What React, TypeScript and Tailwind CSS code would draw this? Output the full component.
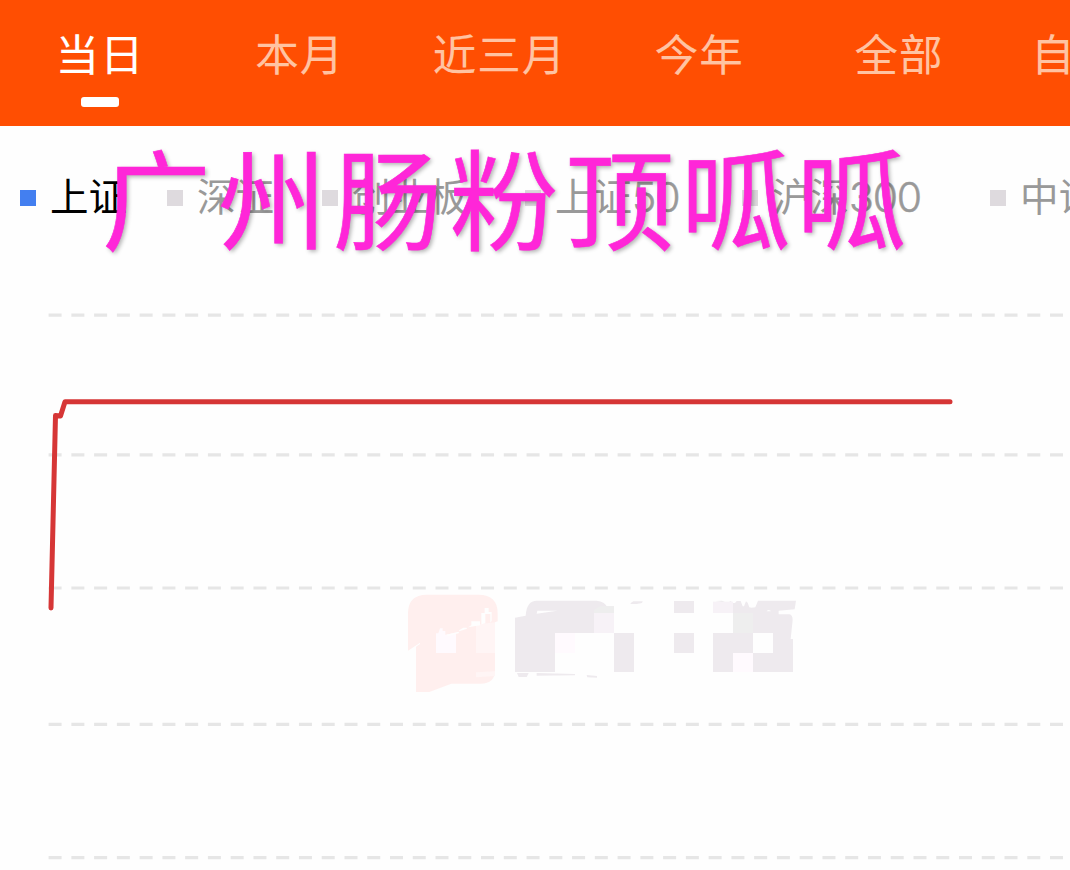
import React, { useState } from 'react';

interface IndexItem {
  name: string;
  digits?: string;
  width: string;
}

const TABS = ['当日', '本月', '近三月', '今年', '全部'];

const INDEXES: IndexItem[] = [
  { name: '上证', width: 'w-[147px]' },
  { name: '深证', width: 'w-[155px]' },
  { name: '创业板', width: 'w-[203px]' },
  { name: '上证', digits: '50', width: 'w-[217px]' },
  { name: '沪深', digits: '300', width: 'w-[248px]' },
  { name: '中证', width: 'w-[120px]' },
];

const GRID_LINES = [315.2, 454.8, 588, 724.4, 857.7];

function Watermark() {
  return (
    <g transform="translate(390 580) scale(0.33333)">
      {/* Badge */}
      <path
        d="M54 212V100Q54 44 110 44H266Q323 44 323 100V124L315 127V270Q315 311 272 311H184L118 336H78V200L90 192V188Z"
        fill="#ffefee"
      />
      <path d="M258 134L315 127V219H258ZM258 277L315 274V288L258 292Z" fill="#fff5f5" />
      <path d="M138 160H145L150 145H158V153H166V164L198 158V219H138Z" fill="#fffafe" />
      <path d="M170 164L205 155L208 159L175 168ZM207 151L220 143H230L231 146L208 154ZM234 142L244 136V124H270V136ZM274 133V99H284V84H296V96H305V122L301 128V102H286V130Z" fill="#fefefe" />

      {/* First character block */}
      <path
        d="M375 113L407 107Q410 62 440 62H620Q645 66 650 79H672V99H612V159H495V276H375Z"
        fill="#eeeaee"
      />
      <path d="M442 92H502L440 101Z" fill="#fefefe" />
      <path d="M612 99H672V159H612Z" fill="#f7f2f7" />
      <path d="M630 79H672V99H612V90Z" fill="#eeeeee" />
      <path d="M495 159H555V219H495Z" fill="#fffafe" />
      <path d="M672 159H732V276H672Z" fill="#eeeaee" />
      <path d="M381 279H416L410 291H386ZM440 279L555 282V286L440 287ZM590 285L621 288V293L592 292ZM722 69L730 64H758L756 69L740 72H722Z" fill="#eeeaee" />

      {/* Middle squares */}
      <path d="M852 63H912V99H852ZM852 159H912V219H852Z" fill="#eeeaee" />

      {/* Last character block */}
      <path
        d="M976 63L996 62L1012 69L1022 63L1029 69H1035L1040 63L1052 63L1058 79H1062L1068 64L1073 68L1078 82L1084 83L1096 82L1104 62H1218L1214 88L1166 92V103H1198Q1208 105 1208 120L1202 177H1209V276H1089V219H1029V276H969V159H1089V99H1029V69L1000 67Z"
        fill="#eeeaee"
      />
      <path d="M1130 94Q1134 87 1142 92V94Z" fill="#fefefe" />
      <path d="M969 65H1029V99H969Z" fill="#f7f2f7" />
      <path d="M1029 99H1089V159H1029Z" fill="#eeeeee" />
      <path d="M1089 159H1149V219H1089Z" fill="#fefefe" />
      <path d="M1029 219H1089V276H1029Z" fill="#fffafe" />
    </g>
  );
}

export default function App() {
  const [activeTab, setActiveTab] = useState(0);
  const [activeIndex, setActiveIndex] = useState(0);

  return (
    <div className="relative w-[1070px] h-[870px] overflow-hidden bg-[#fefefe] font-['Noto_Sans_CJK_SC',sans-serif]">
      {/* Period tabs */}
      <nav className="flex h-[126px] overflow-hidden bg-[#ff4e02]">
        {TABS.map((tab, i) => (
          <button
            key={tab}
            onClick={() => setActiveTab(i)}
            className={`flex w-[199.8px] shrink-0 flex-col items-center pt-[21px] text-[43.5px] leading-[64px] tracking-[1px] [-webkit-text-stroke:0.1px] ${
              i === activeTab ? 'text-white' : 'text-[#ffc3a2]'
            }`}
          >
            <span>{tab}</span>
            {i === activeTab && <span className="mt-[12px] h-[10px] w-[38px] rounded-[3px] bg-white" />}
          </button>
        ))}
        <button className="shrink-0 self-start pl-[32px] pt-[21px] text-[43.5px] leading-[64px] text-[#ffc3a2] [-webkit-text-stroke:0.1px]">
          自
        </button>
      </nav>

      {/* Index legend */}
      <div className="flex h-[144px] items-center overflow-hidden pl-5">
        {INDEXES.map((item, i) => (
          <button
            key={i}
            onClick={() => setActiveIndex(i)}
            className={`flex shrink-0 items-center gap-[14px] whitespace-nowrap text-[38.5px] leading-[56px] ${item.width} ${
              i === activeIndex ? 'text-black' : 'text-[#999999]'
            }`}
          >
            <span className={`size-[16px] shrink-0 ${i === activeIndex ? 'bg-[#437ff0]' : 'bg-[#dedade]'}`} />
            <span className="flex items-center pb-[8px]">
              {item.name}
              {item.digits && (
                <span className="pt-[5px] font-['Inter',sans-serif] text-[41px] font-light tracking-[-1.2px] [-webkit-text-stroke:0.5px]">
                  {item.digits}
                </span>
              )}
            </span>
          </button>
        ))}
      </div>

      {/* Return curve */}
      <svg className="block" width="1070" height="600" viewBox="0 270 1070 600" fill="none">
        {GRID_LINES.map((y) => (
          <path key={y} d={`M48.6 ${y}H1063`} stroke="#e6e6e6" strokeWidth="3.2" strokeDasharray="13 9.76" />
        ))}
        <Watermark />
        <path
          d="M51 608L55.5 415.5L60.5 416L65 401.8H950"
          stroke="#d63636"
          strokeWidth="5"
          strokeLinecap="round"
          strokeLinejoin="round"
        />
      </svg>

      {/* Caption laid over the legend */}
      <p className="absolute left-[102px] top-[111px] whitespace-nowrap text-[109px] leading-[168px] tracking-[6.8px] text-[#ff26d8] [-webkit-text-stroke:0.6px_#ff26d8] [text-shadow:2px_2px_4px_rgba(0,0,0,0.3)]">
        广州肠粉顶呱呱
      </p>
    </div>
  );
}
